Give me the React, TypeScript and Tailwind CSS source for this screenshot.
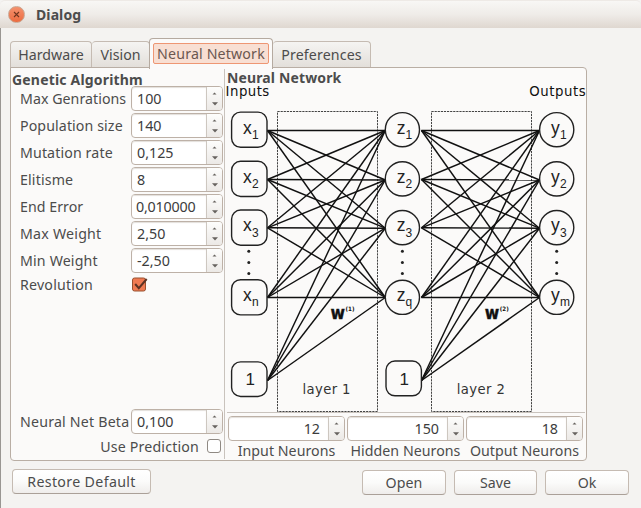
import React from "react";

const ui = "font-['Noto_Sans','Open_Sans',sans-serif]";

function Steppers() {
  return (
    <div className="flex w-[16px] shrink-0 flex-col items-center justify-between rounded-r-[3px] border-l border-[#cdc7c0] bg-linear-to-b from-[#fdfdfc] to-[#ece9e6] pt-[5px] pb-[4px]">
      <svg width="5" height="3" viewBox="0 0 5 3"><path d="M0.5 2.6L2.5 0.4L4.5 2.6Z" fill="#66625e" /></svg>
      <svg width="6" height="4" viewBox="0 0 6 4"><path d="M0 0.3H6L3 3.5Z" fill="#66625e" /></svg>
    </div>
  );
}

function Spin({ value, right = false, className = "", text = "" }: { value: string; right?: boolean; className?: string; text?: string }) {
  return (
    <div className={`flex h-[25px] shrink-0 rounded-[4px] border border-[#bdb1a7] bg-white ${className}`}>
      <div className={`flex flex-1 items-center rounded-l-[3px] pt-[2px] text-[14.3px] leading-none whitespace-nowrap text-[#3c3c3c] shadow-[inset_0_1px_1px_#e3dfdb] ${right ? "justify-end pr-[8px]" : "pl-[5px]"} ${text}`}>{value}</div>
      <Steppers />
    </div>
  );
}

const rows = [
  { label: "Max Genrations", value: "100", track: "tracking-[0.04px]", text: "" },
  { label: "Population size", value: "140", track: "tracking-[0.1px]", text: "" },
  { label: "Mutation rate", value: "0,125", track: "tracking-[0.12px]", text: "" },
  { label: "Elitisme", value: "8", track: "tracking-[0.15px]", text: "" },
  { label: "End Error", value: "0,010000", track: "tracking-[0.04px]", text: "-ml-px tracking-[-0.2px]" },
  { label: "Max Weight", value: "2,50", track: "tracking-[0.22px]", text: "" },
  { label: "Min Weight", value: "-2,50", track: "tracking-[0.16px]", text: "" },
];

function Button({ children, className = "" }: { children: React.ReactNode; className?: string }) {
  return (
    <button className={`flex h-[25px] items-center justify-center rounded-[4px] border border-[#c5bbb2] border-b-[#aaa098] bg-linear-to-b from-white via-[#fbfbfa] to-[#efedeb] pt-px text-[14.2px] leading-none whitespace-nowrap text-[#4c4c4c] ${className}`}>
      {children}
    </button>
  );
}

const outY = [130.5, 179.5, 227.8, 297.5, 380.5];
const inY = [130.5, 180, 228.2, 297.5];
const nodeY = [129.7, 178.9, 227.6, 297.3];

function Links({ from, to }: { from: number; to: number }) {
  return (
    <g stroke="#111" strokeWidth="1.45">
      {outY.map((a) => inY.map((b) => <line key={`${a}-${b}`} x1={from} y1={a} x2={to} y2={b} />))}
    </g>
  );
}

function Name({ x, y, letter, sub }: { x: number; y: number; letter: string; sub: string }) {
  return (
    <g fill="#222">
      <text x={x - 6.5} y={y + 3.8} fontSize="17.5">{letter}</text>
      <text x={x + 2.4} y={y + 9} fontSize="12">{sub}</text>
    </g>
  );
}

function Diagram() {
  return (
    <svg className="block shrink-0 font-['Liberation_Sans',sans-serif]" width="360" height="327" viewBox="226 85 360 327">
      <g fill="none" stroke="#444" strokeWidth="1" strokeDasharray="2.2 0.9">
        <rect x="277.5" y="111.5" width="100" height="300" />
        <rect x="431.5" y="111.5" width="100" height="300" />
      </g>
      <Links from={267.5} to={385.3} />
      <Links from={421.5} to={539.5} />
      <g fill="#fbfaf9" stroke="#222" strokeWidth="1.4">
        {nodeY.map((y) => <rect key={y} x="231.6" y={y - 17.6} width="35.4" height="35.2" rx="9" />)}
        <rect x="231.6" y="361.9" width="35.4" height="34.6" rx="9" />
        <rect x="386" y="361" width="35.4" height="34.8" rx="9" />
        {nodeY.map((y) => <circle key={y} cx="402.4" cy={y} r="17.1" />)}
        {nodeY.map((y) => <circle key={y} cx="556.7" cy={y} r="17.1" />)}
      </g>
      {["1", "2", "3", "n"].map((s, i) => <Name key={s} x={249.6} y={nodeY[i]} letter="x" sub={s} />)}
      {["1", "2", "3", "q"].map((s, i) => <Name key={s} x={403.2} y={nodeY[i]} letter="z" sub={s} />)}
      {["1", "2", "3", "m"].map((s, i) => <Name key={s} x={557.5} y={nodeY[i]} letter="y" sub={s} />)}
      <g fill="#222">
        {[248.8, 402.4, 556.7].map((x) => [251.3, 262.5, 273.6].map((y) => <circle key={`${x}-${y}`} cx={x} cy={y} r="1.5" />))}
      </g>
      <g fill="#222" fontSize="17">
        <text x="245.6" y="384.5">1</text>
        <text x="399.4" y="384.5">1</text>
      </g>
      <g fill="#111" className="font-['DejaVu_Sans',sans-serif]">
        <text x="225.6" y="96.4" fontSize="13.3" textLength="43.7">Inputs</text>
        <text x="529.3" y="96.4" fontSize="13.3" textLength="56.4">Outputs</text>
        <g fill="#333" fontSize="13.2">
          <text x="302.5" y="393.6" textLength="48">layer 1</text>
          <text x="456.8" y="393.6" textLength="48">layer 2</text>
        </g>
        <g fontWeight="bold">
          <text x="330.6" y="318.6" fontSize="17.5" textLength="14.5" lengthAdjust="spacingAndGlyphs" stroke="#111" strokeWidth="0.4">w</text>
          <text x="345.5" y="310.8" fontSize="6" textLength="9" lengthAdjust="spacingAndGlyphs">(1)</text>
          <text x="484.8" y="318.6" fontSize="17.5" textLength="14.5" lengthAdjust="spacingAndGlyphs" stroke="#111" strokeWidth="0.4">w</text>
          <text x="499.8" y="310.8" fontSize="6" textLength="9" lengthAdjust="spacingAndGlyphs">(2)</text>
        </g>
      </g>
    </svg>
  );
}

const idleTab = "flex h-[27px] items-center justify-center rounded-t-[4px] border border-[#c5bbb2] border-b-[#b5aaa0] bg-linear-to-b from-[#f5f4f2] to-[#e3dfda] pt-[2px]";

export default function App() {
  return (
    <div className={`flex h-[508px] w-[641px] flex-col overflow-hidden bg-[#f4f3f1] text-[14.2px] leading-none text-[#4c4c4c] ${ui}`}>
      <header className="flex h-[28px] shrink-0 items-center rounded-t-[5px] border-t border-[#eeeae6] bg-linear-to-b from-[#f8f7f5] via-[#efece8] to-[#dfd7d0] pl-[8px]">
        <span className="flex size-[17px] items-center justify-center rounded-full border border-[#c9a793] bg-linear-to-b from-[#f4916d] to-[#ec6b3f]">
          <svg width="7" height="7" viewBox="0 0 7 7"><path d="M1 1L6 6M6 1L1 6" stroke="#70351f" strokeWidth="1.1" /></svg>
        </span>
        <h1 className="ml-[11px] text-[14px] font-bold tracking-[0.1px]">Dialog</h1>
      </header>

      <div className="flex flex-1 flex-col border-l border-[#999692] pl-[9px]">
        <nav className="mt-[10px] flex h-[30px] shrink-0 items-end">
          <div className={`${idleTab} w-[82px]`}>Hardware</div>
          <div className={`${idleTab} w-[58px] border-l-0`}>Vision</div>
          <div className="z-10 -mb-px -ml-px flex h-[31px] w-[124px] items-center justify-center rounded-t-[4px] border border-b-0 border-[#b5aaa0] bg-[#fbfaf9] pb-px">
            <span className="flex h-[21px] w-[116px] items-center justify-center rounded-[2px] border border-[#ee9673] bg-[#f8dfd3] pt-px tracking-[0.16px] whitespace-nowrap text-[#6b5750]">Neural Network</span>
          </div>
          <div className={`${idleTab} w-[98px] border-l-0 tracking-[0.15px]`}>Preferences</div>
        </nav>

        <main className="-mt-px flex h-[394px] w-[577px] shrink-0 rounded-[4px] rounded-tl-none border border-[#b9aea4] bg-[#fbfaf9]">
          <section className="flex w-[213px] shrink-0 flex-col pt-[4px]">
            <h2 className="h-[14px] pt-[1px] pl-[1px] text-[14px] leading-[14px] font-bold tracking-[0.18px] whitespace-nowrap">Genetic Algorithm</h2>
            <div className="flex flex-col gap-[2px] pl-[9px]">
              {rows.map((r) => (
                <div key={r.label} className="flex h-[25px] items-center">
                  <label className={`w-[111px] pt-[2px] whitespace-nowrap ${r.track}`}>{r.label}</label>
                  <Spin value={r.value} text={r.text} className="w-[92px]" />
                </div>
              ))}
            </div>
            <div className="mt-[4px] flex h-[16px] items-center pl-[9px]">
              <label className="w-[112px] tracking-[0.2px]">Revolution</label>
              <svg width="16" height="16" viewBox="0 0 16 16">
                <rect x="0.5" y="1" width="13" height="13" rx="2" fill="#ef7a52" stroke="#98502f" />
                <path d="M3.2 7L6.8 11.2L14.7 2" fill="none" stroke="#5c3324" strokeWidth="2" />
              </svg>
            </div>
            <div className="mt-auto flex items-center pl-[9px]">
              <label className="w-[111px] pt-[2px] tracking-[0.2px] whitespace-nowrap">Neural Net Beta</label>
              <Spin value="0,100" className="w-[92px]" />
            </div>
            <div className="mt-[3px] mb-[5px] flex h-[18px] items-center justify-end pr-[3px]">
              <label className="mr-[8px] pt-[2px] tracking-[0.18px]">Use Prediction</label>
              <span className="size-[14px] rounded-[3px] border border-[#8f8983] bg-white" />
            </div>
          </section>

          <section className="mt-px mb-px flex flex-1 flex-col border-l border-[#c9c3bd]">
            <h2 className="h-[16px] pl-[2px] text-[14px] leading-none font-bold tracking-[0.13px]"><span className="block pt-[2px]">Neural Network</span></h2>
            <div className="-ml-px pl-[2px]"><Diagram /></div>
            <hr className="mr-[1px] ml-[2px] border-[#c9c3bd]" />
            <div className="mt-[3px] flex gap-[2px] pl-[3px]">
              {[["Input Neurons", "12"], ["Hidden Neurons", "150"], ["Output Neurons", "18"]].map(([label, value]) => (
                <div key={label} className="flex w-[117px] flex-col items-center">
                  <Spin value={value} right className="w-full" />
                  <label className="mt-[3px] tracking-[0.04px] whitespace-nowrap">{label}</label>
                </div>
              ))}
            </div>
          </section>
        </main>

        <footer className="mt-[8px] flex items-start pl-[2px]">
          <Button className="w-[139px] tracking-[0.35px]">Restore Default</Button>
          <Button className="mt-px ml-[211px] w-[84px] tracking-[0.1px]">Open</Button>
          <Button className="mt-px ml-[8px] w-[83px]">Save</Button>
          <Button className="mt-px ml-[8px] w-[84px]">Ok</Button>
        </footer>
      </div>
    </div>
  );
}
